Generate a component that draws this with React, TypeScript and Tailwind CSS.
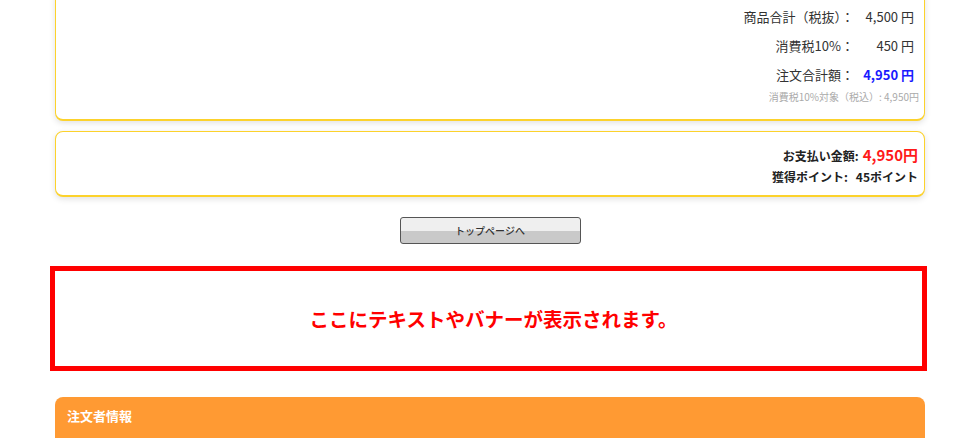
import React from "react";

const font = {fontFamily: '"Noto Sans CJK JP", "Noto Sans", sans-serif'};

function SummaryRow({label, value, strong}: { label: string; value: string; strong?: boolean }) {
  return (
    <div className="flex items-center justify-end h-[29px] text-[13px] text-[#333]">
      <span className="text-right">{label}</span>
      <span className={strong
        ? "w-[60px] text-right font-bold text-[#1a1aff]"
        : "w-[60px] text-right"}>{value}</span>
    </div>
  );
}

export default function App() {
  return (
    <div style={font} className="w-[980px] h-[438px] overflow-hidden bg-white">
      {/* Order totals */}
      <div className="mx-[55px] mt-[-10px] rounded-lg border border-b-2 border-[#fcd22c] bg-white shadow-[0_2px_6px_rgba(0,0,0,0.12)] pt-[11px] pb-[15px] pr-[10px]">
        <SummaryRow label="商品合計（税抜）：" value="4,500 円"/>
        <SummaryRow label="消費税10%：" value="450 円"/>
        <SummaryRow label="注文合計額：" value="4,950 円" strong/>
        <div className="mr-[-5px] text-right text-[10px] leading-[15px] text-[#aaa]">消費税10%対象（税込）: 4,950円</div>
      </div>

      {/* Payment */}
      <div className="mx-[55px] mt-[10px] rounded-lg border border-b-2 border-[#fcd22c] bg-white shadow-[0_2px_6px_rgba(0,0,0,0.12)] pt-[13px] pb-[8px] pr-[6px] text-right text-[12px] font-bold text-[#222]">
        <div className="h-[21px] flex items-center justify-end gap-1">
          <span>お支払い金額:</span>
          <span className="text-[15px] text-[#ff1a1a]">4,950円</span>
        </div>
        <div className="h-[21px] flex items-center justify-end gap-2">
          <span>獲得ポイント:</span>
          <span>45ポイント</span>
        </div>
      </div>

      {/* Top page button */}
      <div className="flex justify-center mt-[20px]">
        <button className="w-[181px] h-[27px] rounded-[3px] border border-[#555] bg-[linear-gradient(#efefef_0%,#efefef_50%,#c9c9c9_50%,#c9c9c9_100%)] text-[10px] font-medium text-[#333] leading-none">
          トップページへ
        </button>
      </div>

      {/* Banner area */}
      <div className="ml-[50px] mt-[22px] w-[877px] h-[105px] border-[5px] border-[#ff0000] flex items-center justify-center">
        <span className="pl-[10px] text-[19.5px] font-bold text-[#ff0000]">ここにテキストやバナーが表示されます。</span>
      </div>

      {/* Orderer info */}
      <div className="mx-[55px] mt-[26px] h-[50px] rounded-t-lg bg-[#ff9a33] px-3 pt-[9px] text-[13px] font-bold text-white">
        注文者情報
      </div>
    </div>
  );
}
